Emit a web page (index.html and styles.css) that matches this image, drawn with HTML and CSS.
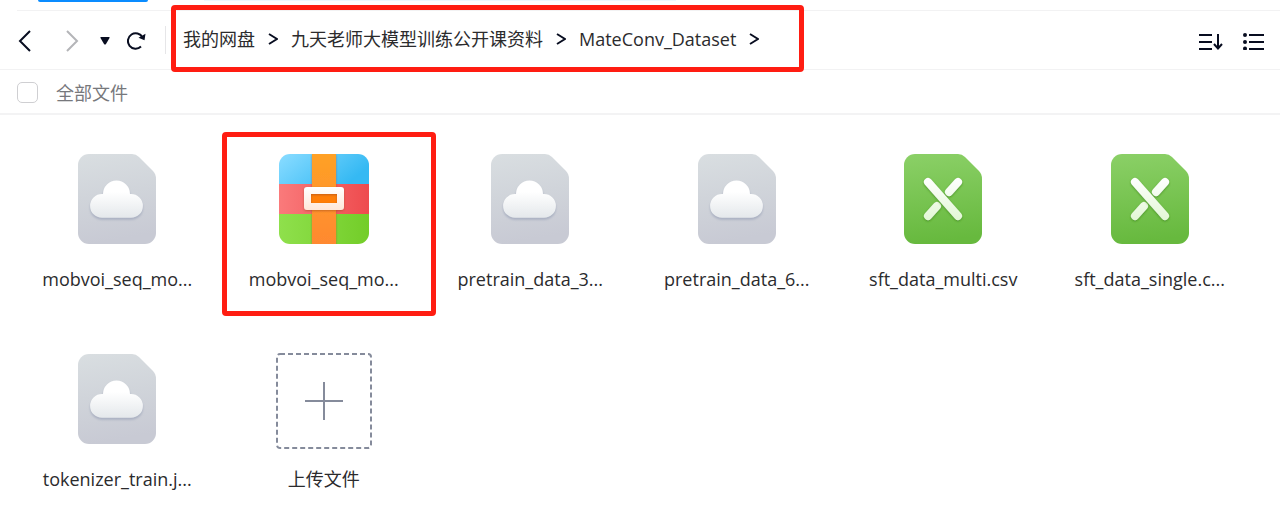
FILE: index.html
```html
<!DOCTYPE html>
<html lang="zh-CN">
<head>
<meta charset="utf-8">
<meta name="viewport" content="width=device-width, initial-scale=1">
<title>MateConv_Dataset</title>
<link rel="stylesheet" href="styles.css">
</head>
<body>
<svg class="defs" aria-hidden="true">
  <defs>
    <linearGradient id="gray" x1="0" y1="0" x2="0.15" y2="1"><stop offset="0" stop-color="#d9dee1"/><stop offset="0.5" stop-color="#d0d4da"/><stop offset="1" stop-color="#c8cad4"/></linearGradient>
    <linearGradient id="cloudfill" x1="0" y1="0" x2="0" y2="1"><stop offset="0.3" stop-color="#ffffff"/><stop offset="1" stop-color="#e4e8eb"/></linearGradient>
    <linearGradient id="green" x1="0" y1="0" x2="0.1" y2="1"><stop offset="0" stop-color="#8bd067"/><stop offset="1" stop-color="#67b93e"/></linearGradient>
    <linearGradient id="blue" x1="0" y1="0" x2="1" y2="0.4"><stop offset="0.1" stop-color="#82d9ff"/><stop offset="1" stop-color="#35b9f3"/></linearGradient>
    <linearGradient id="red"><stop offset="0" stop-color="#fa7a7b"/><stop offset="1" stop-color="#ee4b4e"/></linearGradient>
    <linearGradient id="lime"><stop offset="0" stop-color="#8fe04c"/><stop offset="1" stop-color="#73cd29"/></linearGradient>
    <linearGradient id="orange" x1="0" y1="0" x2="0" y2="1"><stop offset="0" stop-color="#ffa126"/><stop offset="1" stop-color="#ff8930"/></linearGradient>
    <linearGradient id="buckle" x1="0" y1="0" x2="0" y2="1"><stop offset="0" stop-color="#ffffff"/><stop offset="1" stop-color="#ffe7d9"/></linearGradient>
    <linearGradient id="bars" gradientUnits="userSpaceOnUse" x1="0" y1="24" x2="0" y2="66"><stop offset="0" stop-color="#ffffff"/><stop offset="1" stop-color="#e2f7d5"/></linearGradient>
    <filter id="cloudshadow" x="-20%" y="-20%" width="140%" height="150%"><feDropShadow dx="0" dy="2" stdDeviation="1" flood-color="#9aa2b8" flood-opacity="0.7"/></filter>
    <filter id="barshadow" x="-20%" y="-20%" width="140%" height="150%"><feDropShadow dx="0" dy="1" stdDeviation="1" flood-color="#3c8a1b" flood-opacity="0.8"/></filter>
    <filter id="strapshadow" x="-30%" y="-20%" width="160%" height="150%"><feDropShadow dx="0" dy="1" stdDeviation="1" flood-color="#a3481c" flood-opacity="0.6"/></filter>
    <clipPath id="tile"><rect width="90" height="90" rx="11"/></clipPath>
  </defs>
  <symbol id="cloud-file" viewBox="0 0 78 90">
    <path fill="url(#gray)" d="M11 0H54Q58 0 61 3L75 17Q78 20 78 25V79A11 11 0 0 1 67 90H11A11 11 0 0 1 0 79V11A11 11 0 0 1 11 0Z"/>
    <path filter="url(#cloudshadow)" fill="url(#cloudfill)" d="M24 40H25A13.500 13.500 0 0 1 52 40H53A11.900 11.900 0 0 1 53 63.800H24A11.900 11.900 0 0 1 24 40Z"/>
  </symbol>
  <symbol id="sheet-file" viewBox="0 0 78 90">
    <path fill="url(#green)" d="M11 0H54Q58 0 61 3L75 17Q78 20 78 25V79A11 11 0 0 1 67 90H11A11 11 0 0 1 0 79V11A11 11 0 0 1 11 0Z"/>
    <g stroke="url(#bars)" stroke-width="8" stroke-linecap="round">
      <path filter="url(#barshadow)" d="M54 28L45 38M33 52L24 62"/><path filter="url(#barshadow)" d="M24 28L54 62"/>
    </g>
  </symbol>
  <symbol id="zip-file" viewBox="0 0 90 90">
    <g clip-path="url(#tile)">
      <path fill="url(#blue)" d="M0 0H90V30H0Z"/><path fill="url(#red)" d="M0 30H90V60H0Z"/><path fill="url(#lime)" d="M0 60H90V90H0Z"/>
      <path filter="url(#strapshadow)" fill="url(#orange)" d="M33 0H57V90H33Z"/>
      <path fill="#ff7e08" d="M32 40H58V49H32Z"/>
      <path filter="url(#strapshadow)" fill="url(#buckle)" fill-rule="evenodd" d="M28 33H62Q65 33 65 36V53Q65 56 62 56H28Q25 56 25 53V36Q25 33 28 33ZM32 40V49H58V40Z"/>
    </g>
  </symbol>
  <symbol id="crumb" viewBox="0 0 10 12"><path fill="none" stroke="#080d20" stroke-width="2" d="M1 1L9 6L1 11"/></symbol>
</svg>

<header class="tabs"><span class="tab-active"></span><span class="tab-soft"></span></header>

<div class="toolbar">
  <div class="history">
    <button class="tool" type="button" aria-label="后退"><svg width="14" height="22" viewBox="0 0 14 22"><path d="M12 1L2 11L12 21"/></svg></button>
    <button class="tool tool-forward" type="button" aria-label="前进" disabled><svg width="14" height="22" viewBox="0 0 14 22"><path d="M2 1L12 11L2 21"/></svg></button>
    <button class="tool tool-recent" type="button" aria-label="历史记录"><svg width="10" height="8" viewBox="0 0 10 8"><path class="solid" d="M1 0H9Q10 0 9.500 1L6 7Q5 8 4 7L0.500 1Q0 0 1 0Z"/></svg></button>
    <button class="tool tool-refresh" type="button" aria-label="刷新"><svg width="20" height="18" viewBox="0 0 20 18"><path d="M14 14.500A7.700 7.700 0 1 1 15.500 5.500"/><path class="solid" d="M18.500 1.800L17.500 8.300L11.500 5.800Z"/></svg></button>
  </div>
  <nav class="path" aria-label="路径">
    <a href="#">我的网盘</a><svg class="sep"><use href="#crumb"/></svg>
    <a href="#">九天老师大模型训练公开课资料</a><svg class="sep"><use href="#crumb"/></svg>
    <a href="#">MateConv_Dataset</a><svg class="sep"><use href="#crumb"/></svg>
  </nav>
  <div class="view">
    <button class="tool" type="button" aria-label="排序"><svg width="24" height="18" viewBox="0 0 24 18"><path d="M0 3H13M0 10H13M0 17H13M19 2V16M15 12L19 16.500L23 12"/></svg></button>
    <button class="tool" type="button" aria-label="列表视图"><svg width="22" height="18" viewBox="0 0 22 18"><path d="M6 3H21M6 10H21M6 17H21"/><path class="solid" d="M0 3a2 2 0 1 0 4 0a2 2 0 1 0-4 0M0 10a2 2 0 1 0 4 0a2 2 0 1 0-4 0M0 16.500a2 2 0 1 0 4 0a2 2 0 1 0-4 0"/></svg></button>
  </div>
</div>

<div class="selectbar"><input class="check" type="checkbox" id="all"><label for="all">全部文件</label></div>

<main class="files">
  <a class="file" href="#"><svg class="icon"><use href="#cloud-file"/></svg><span>mobvoi_seq_mo...</span></a>
  <a class="file marked" href="#"><svg class="icon"><use href="#zip-file"/></svg><span>mobvoi_seq_mo...</span></a>
  <a class="file" href="#"><svg class="icon"><use href="#cloud-file"/></svg><span>pretrain_data_3...</span></a>
  <a class="file" href="#"><svg class="icon"><use href="#cloud-file"/></svg><span>pretrain_data_6...</span></a>
  <a class="file" href="#"><svg class="icon"><use href="#sheet-file"/></svg><span>sft_data_multi.csv</span></a>
  <a class="file" href="#"><svg class="icon"><use href="#sheet-file"/></svg><span>sft_data_single.c...</span></a>
  <a class="file" href="#"><svg class="icon"><use href="#cloud-file"/></svg><span>tokenizer_train.j...</span></a>
  <button class="file upload" type="button"><svg class="drop" viewBox="0 0 96 96"><rect x="1" y="1" width="94" height="94" rx="3"/><path d="M29 48H67M48 29V67"/></svg><span>上传文件</span></button>
</main>
</body>
</html>
```
FILE: styles.css
```css
*, *::before, *::after { box-sizing: border-box; }
body {
  margin: 0;
  background: #fff;
  color: #2b2b2d;
  font: 18px/26px "Open Sans", "Noto Sans CJK SC", sans-serif;
}
a { color: inherit; text-decoration: none; }
button { border: 0; padding: 0; background: none; font: inherit; color: inherit; }
.defs { position: absolute; width: 0; height: 0; }

.tabs { display: flex; gap: 56px; height: 10px; padding: 0 38px; }
.tab-active { width: 110px; height: 2px; border-radius: 0 0 12px 12px; background: #0a8cff; }
.tab-soft { width: 472px; height: 1px; background: #edf8ff; }

.toolbar {
  position: relative;
  display: flex;
  align-items: center;
  height: 60px;
  padding: 0 15px 0 18px;
  border-bottom: 1px solid #f2f2f3;
}
.toolbar::before {
  content: "";
  position: absolute;
  inset: 0 0 auto 17px;
  height: 1px;
  background: #f2f2f3;
}
.history {
  display: flex;
  align-items: center;
  height: 28px;
  width: 148px;
  border-right: 1px solid #e6e6e8;
}
.tool { display: flex; padding-top: 3px; }
.tool svg { fill: none; stroke: #080d20; stroke-width: 2; }
.tool .solid { fill: #080d20; stroke: none; }
.tool-forward { margin-left: 33px; }
.tool-forward svg { stroke: #b4b5b8; }
.tool-recent { margin-left: 21px; }
.tool-refresh { margin-left: 17px; }

.path {
  position: relative;
  display: flex;
  align-items: center;
  gap: 13px;
  margin-left: 5px;
  padding: 0 45px 2px 12px;
  height: 60px;
}
.path::after, .marked::after {
  content: "";
  position: absolute;
  border: 5px solid #ff1d12;
  border-radius: 4px;
  pointer-events: none;
}
.path::after { inset: -5px 0 -2px; }
.sep { width: 10px; height: 12px; }
.view { display: flex; gap: 20px; margin-left: auto; }

.selectbar {
  display: flex;
  align-items: center;
  gap: 18px;
  height: 45px;
  padding: 2px 17px 0;
  border-bottom: 2px solid #f3f3f4;
  color: #77787c;
}
.check {
  appearance: none;
  width: 21px;
  height: 21px;
  margin: 0;
  border: 1px solid #cfcfd2;
  border-radius: 5px;
}

.files {
  display: grid;
  grid-template-columns: repeat(6, minmax(0, 1fr));
  row-gap: 46px;
  padding: 35px 27px 0 14px;
}
.file {
  position: relative;
  display: flex;
  flex-direction: column;
  align-items: center;
  justify-content: space-between;
  height: 154px;
  padding: 4px 0 12px;
}
.marked::after { inset: -18px -9px auto 1px; height: 184px; }
.icon { width: 90px; height: 90px; }
.drop { width: 96px; height: 96px; margin-top: -1px; }
.drop { fill: none; stroke: #858b9b; stroke-width: 2; }
.drop rect { stroke-dasharray: 5 3; }
```
